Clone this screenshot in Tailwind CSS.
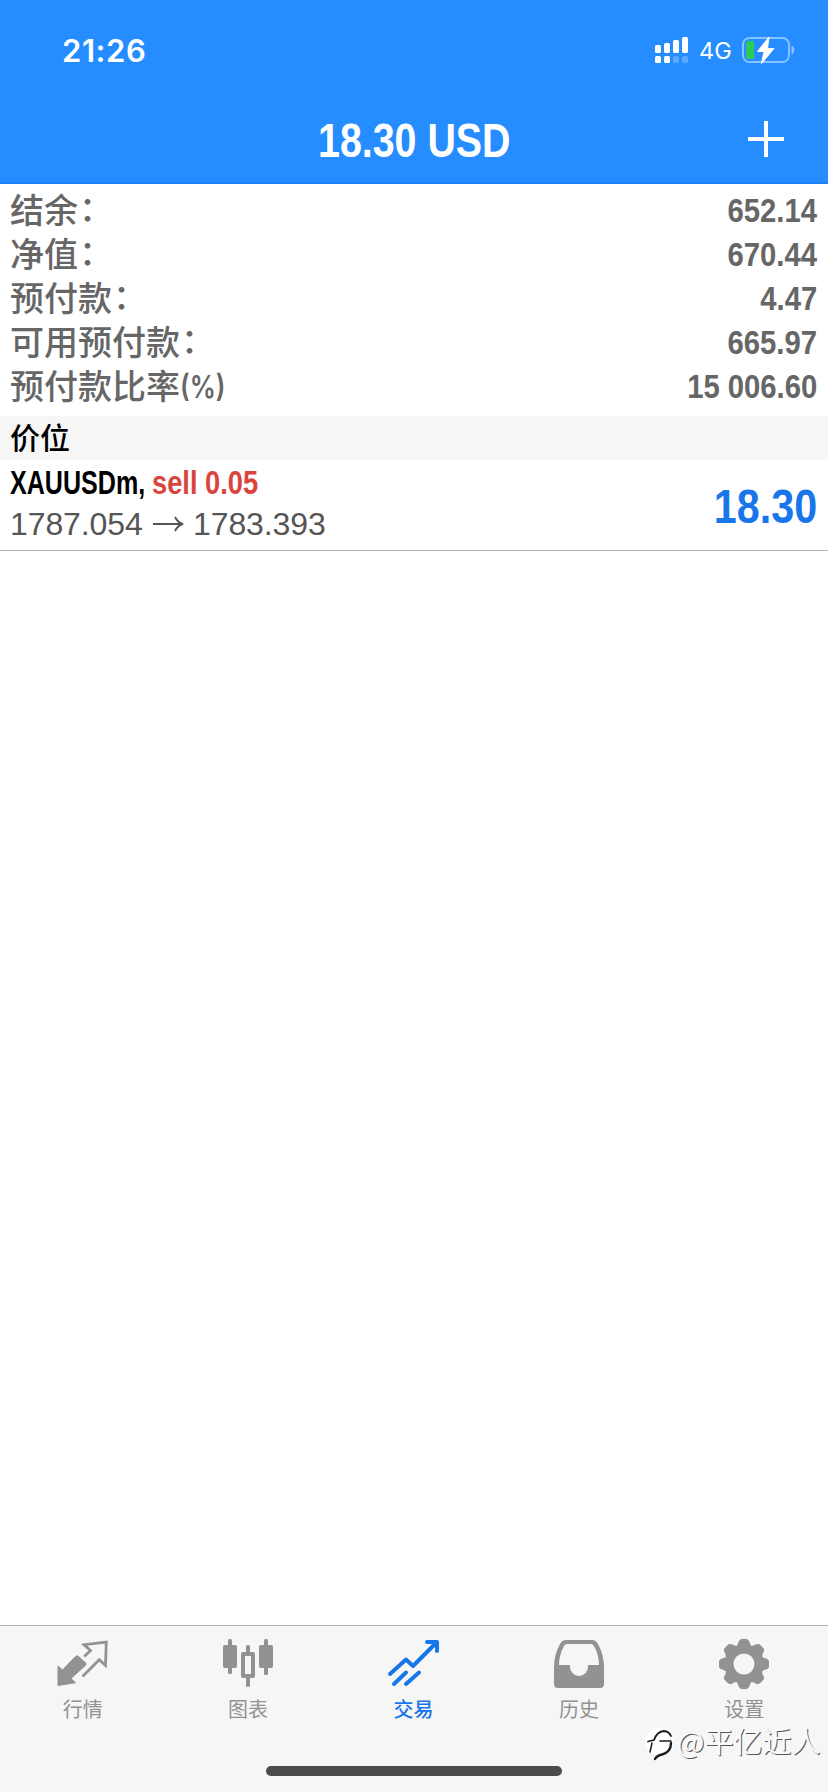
<!DOCTYPE html>
<html lang="zh-CN">
<head>
<meta charset="utf-8">
<title>交易</title>
<script src="https://cdn.jsdelivr.net/npm/@tailwindcss/browser@4"></script>
</head>
<body class="bg-white">
<div class="relative flex h-[1792px] w-[828px] flex-col overflow-hidden font-['Liberation_Sans','Noto_Sans_CJK_SC',sans-serif]">
  <header class="h-[184px] shrink-0 border-b-2 border-[#1a80f6] bg-[#258dff] text-white">
    <div class="flex h-[98px] items-center justify-between pl-[62px] pr-[33px] pt-[2px] font-['Inter',sans-serif]">
      <span class="text-[31px] font-semibold leading-none tracking-[0.6px]">21:26</span>
      <div class="flex items-center">
        <svg class="h-[28px] w-[34px]" viewBox="0 0 34 28" fill="#fff">
          <rect x="0" y="9" width="6" height="8" rx="1.5"/><rect x="9" y="7" width="6" height="10" rx="1.5"/><rect x="18" y="4" width="6" height="13" rx="1.5"/><rect x="27" y="1" width="6" height="16" rx="1.5"/>
          <rect x="0" y="20" width="6" height="7" rx="1.5"/><rect x="9" y="20" width="6" height="7" rx="1.5"/><rect x="18" y="20" width="6" height="7" rx="1.5" opacity=".25"/><rect x="27" y="20" width="6" height="7" rx="1.5" opacity=".25"/>
        </svg>
        <span class="ml-[10px] w-[32px] pt-[1px] text-[23.5px] leading-none">4G</span>
        <svg class="ml-[11px] h-[28px] w-[53px]" viewBox="0 0 53 28">
          <rect x="1" y="2" width="46" height="24" rx="6.5" fill="none" stroke="#85c2ff" stroke-width="2"/>
          <path d="M49.500 9.500c4 1.500 4 7.500 0 9z" fill="#85c2ff"/>
          <path d="M7 5h5v18H7a3 3 0 0 1-3-3V8a3 3 0 0 1 3-3z" fill="#2ccb58"/>
          <path d="M27 1L15.500 15.500H22L19.500 27.500L32 12.500H25.500z" fill="#fff" stroke="#fff" stroke-width="1" stroke-linejoin="round"/>
        </svg>
      </div>
    </div>
    <div class="grid h-[84px] grid-cols-[1fr_auto_1fr] items-center">
      <span></span>
      <h1 class="w-[192px] whitespace-nowrap pt-[1px] text-[48px] font-bold leading-[84px]"><span class="inline-block origin-left scale-x-[0.82]">18.30 USD</span></h1>
      <svg class="mb-[3px] mr-[44px] h-[36px] w-[36px] justify-self-end" viewBox="0 0 36 36" stroke="#fff" stroke-width="4"><path d="M0 18H36M18 0V36"/></svg>
    </div>
  </header>

  <section class="flex h-[232px] shrink-0 flex-col pl-[10px] pr-[11px] pt-[4px] text-[34px] text-[#666]">
    <div class="flex h-[44px] items-center justify-between"><span class="flex pt-[2px] font-medium leading-[44px]">结余<span class="inline-block translate-x-px -translate-y-[2px]">：</span></span><span class="inline-block origin-right scale-x-[0.86] font-bold leading-[44px]">652.14</span></div>
    <div class="flex h-[44px] items-center justify-between"><span class="flex pt-[2px] font-medium leading-[44px]">净值<span class="inline-block translate-x-px -translate-y-[2px]">：</span></span><span class="inline-block origin-right scale-x-[0.86] font-bold leading-[44px]">670.44</span></div>
    <div class="flex h-[44px] items-center justify-between"><span class="flex pt-[2px] font-medium leading-[44px]">预付款<span class="inline-block translate-x-px -translate-y-[2px]">：</span></span><span class="inline-block origin-right scale-x-[0.86] font-bold leading-[44px]">4.47</span></div>
    <div class="flex h-[44px] items-center justify-between"><span class="flex pt-[2px] font-medium leading-[44px]">可用预付款<span class="inline-block translate-x-px -translate-y-[2px]">：</span></span><span class="inline-block origin-right scale-x-[0.86] font-bold leading-[44px]">665.97</span></div>
    <div class="flex h-[44px] items-center justify-between"><span class="flex pt-[2px] font-medium leading-[44px]">预付款比率<span class="inline-block origin-left scale-x-[0.84] font-['Inter',sans-serif] text-[31px] font-semibold">(%)</span></span><span class="inline-block origin-right scale-x-[0.86] font-bold leading-[44px]">15 006.60</span></div>
  </section>

  <div class="flex h-[44px] shrink-0 items-center bg-[#f6f6f6] pl-[10px] pt-[2px] text-[30px] font-medium leading-[42px] text-black">价位</div>

  <section class="flex h-[91px] shrink-0 items-center justify-between border-b border-[#b5b5b5] pl-[10px] pr-[11px]">
    <div class="flex flex-col pb-[4px]">
      <div class="flex h-[42px] text-[33px] font-bold leading-[42px]">
        <span class="w-[142px]"><span class="inline-block origin-left scale-x-[0.76] text-black">XAUUSDm,</span></span>
        <span class="inline-block origin-left scale-x-[0.826] text-[#d9453d]">sell 0.05</span>
      </div>
      <div class="flex h-[40px] items-center text-[32px] leading-[40px] text-[#555]">
        <span class="w-[133px] tracking-[-0.1px]">1787.054</span>
        <svg class="ml-[10px] mr-[9px] h-[16px] w-[31px]" viewBox="0 0 31 16" fill="none" stroke="#555" stroke-width="2"><path d="M0 8H29M22 1C24 5 26 7 30 8C26 9 24 11 22 15"/></svg>
        <span class="tracking-[-0.1px]">1783.393</span>
      </div>
    </div>
    <span class="inline-block origin-right scale-x-[0.86] pt-[3px] text-[48px] font-bold leading-[84px] text-[#1976ea]">18.30</span>
  </section>

  <main class="grow"></main>

  <nav class="h-[167px] shrink-0 border-t border-[#b0b0b0] bg-[#f6f6f6]">
    <div class="grid w-[827px] grid-cols-5 pt-[12px] text-center text-[20px] leading-[30px] text-[#929292]">
      <div class="flex flex-col items-center gap-[5px]"><svg class="h-[52px] w-[52px]" viewBox="0 0 52 52"><path d="M1 28L5.500 32L18.500 18.500Q20 17 21.500 18.500L28.500 24.800Q29.500 26 28.500 27.300L14 40.500L18.500 44.700L1 47.500z" fill="#929292" stroke="#929292" stroke-linejoin="round"/><path d="M27.200 18.500L33.500 12.500L27 6.700L49.300 4L48.500 27.500L42.300 21.800L25.500 38.500" fill="none" stroke="#929292" stroke-width="2.800"/></svg><span>行情</span></div>
      <div class="flex flex-col items-center gap-[5px]"><svg class="h-[52px] w-[52px]" viewBox="0 0 52 52" fill="#929292"><rect x="1" y="7" width="14" height="23" rx="2"/><rect x="6" y="1" width="4" height="35" rx="1.500"/><rect x="37" y="7" width="14" height="23" rx="2"/><rect x="42" y="1" width="4" height="36" rx="1.500"/><path fill-rule="evenodd" d="M24 8q2-2 4 0v6h3q2 0 2 2v22q0 2-2 2h-3v8q-2 2-4 0v-8h-3q-2 0-2-2V16q0-2 2-2h3zM23 18v18h6V18z"/></svg><span>图表</span></div>
      <div class="flex flex-col items-center gap-[5px] text-[#1976e8]"><svg class="h-[52px] w-[52px]" viewBox="0 0 52 52" fill="none" stroke="#1976e8" stroke-width="4" stroke-linecap="round" stroke-linejoin="round"><path d="M3 36L19 21.500L26 28L49 5M40 4H50V13M7 46L19 34.500M19 46L32 34.500"/></svg><span class="font-medium">交易</span></div>
      <div class="flex flex-col items-center gap-[5px]"><svg class="h-[52px] w-[52px]" viewBox="0 0 52 52"><path fill="#929292" fill-rule="evenodd" d="M13 2H39Q43 2 45 6Q51 17 51 29V46Q51 50 47 50H5Q1 50 1 46V29Q1 17 7 6Q9 2 13 2zM14 6Q12 6 11 8Q6 17 6 27H17V29A9 9 0 0 0 35 29V27H46Q46 17 41 8Q40 6 38 6z"/></svg><span>历史</span></div>
      <div class="flex flex-col items-center gap-[5px]">
        <svg class="h-[52px] w-[52px]" viewBox="0 0 52 52" fill="#929292">
          <defs><path id="teeth" d="M17 9Q19.500 8 20.500 4Q21.500 1 24 1H28Q30.500 1 31.500 4Q32.500 8 35 9V43Q32.500 44 31.500 48Q30.500 51 28 51H24Q21.500 51 20.500 48Q19.500 44 17 43z"/></defs>
          <use href="#teeth"/><use href="#teeth" transform="rotate(45 26 26)"/><use href="#teeth" transform="rotate(90 26 26)"/><use href="#teeth" transform="rotate(135 26 26)"/>
          <circle cx="26" cy="26" r="10.500" fill="#f6f6f6"/>
        </svg><span>设置</span></div>
    </div>
  </nav>

  <div class="absolute left-[266px] top-[1766px] h-[10px] w-[296px] rounded-full bg-[#4b4b4b]"></div>
  <div class="absolute left-[645px] top-[1720px] flex h-[42px] items-center text-[29px] leading-[40px] text-[#fafafa] [text-shadow:1px_1px_0.5px_#555]">
    <svg class="mt-[2px] h-[38px] w-[32px] shrink-0" viewBox="0 0 32 38" fill="none" stroke-linecap="round"><circle cx="14" cy="19" r="14" fill="#fff"/><path d="M3 18.500L9 17M9 17Q12 8.500 19 8Q24 8.500 26 13" stroke="#1c1c1c" stroke-width="1.800"/><path d="M7 20L5 29M15 18H26" stroke="#1c1c1c" stroke-width="1.500"/><path d="M26 20Q26 29 17 31.500Q12 32.500 10 36" stroke="#1c1c1c" stroke-width="2.400"/></svg>
    <span class="-mt-[3px] whitespace-nowrap font-['Noto_Sans_CJK_SC',sans-serif]">@平亿近人</span>
  </div>
</div>
</body>
</html>
